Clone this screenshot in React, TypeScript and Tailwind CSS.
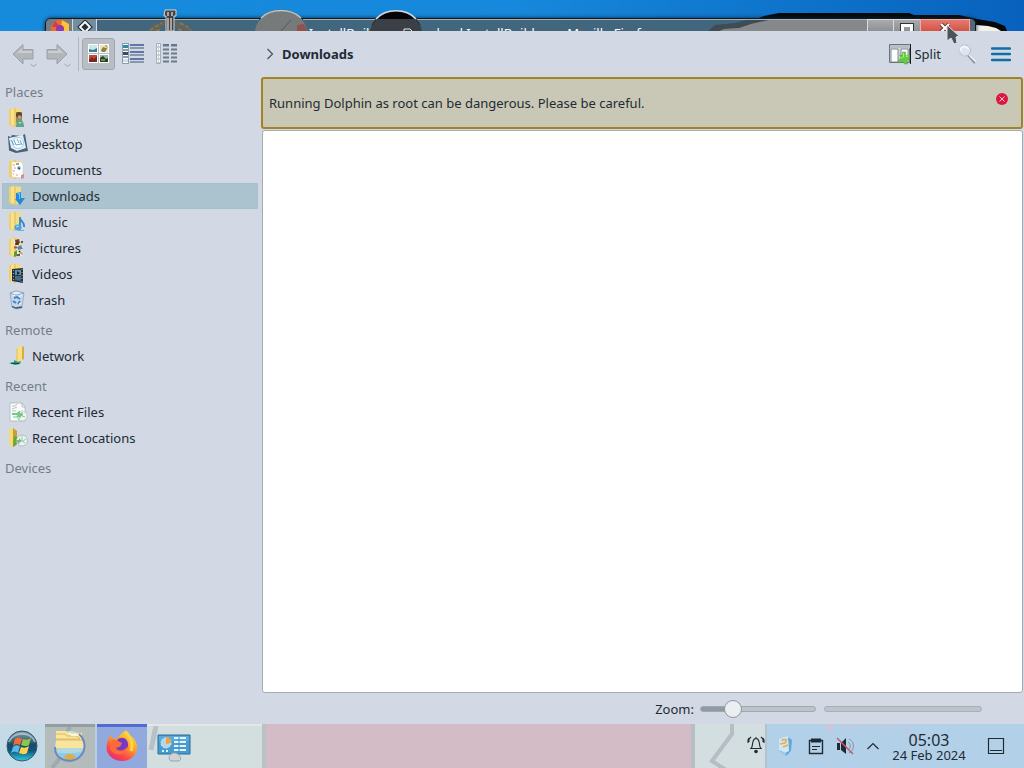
import React from "react";

type Kind =
  | "home" | "desktop" | "documents" | "downloads" | "music" | "pictures"
  | "videos" | "trash" | "network" | "files" | "locations";

function Folder() {
  return (
    <>
      <path d="M1 1l6-1v19l-6-2z" fill="#eed06b" />
      <path d="M3 1l4-1v18l-4-1z" fill="#f6e18c" />
      <path d="M7 0l6 1v15l-6 3z" fill="#f4dc83" />
      <path d="M7 0v19" stroke="#d9b24a" strokeWidth=".8" />
    </>
  );
}

function PlaceIcon({ kind }: { kind: Kind }) {
  return (
    <svg viewBox="0 0 20 20" className="size-5 shrink-0" aria-hidden="true">
      {kind === "home" && (
        <>
          <Folder />
          <path d="M8 4h6v9l-6 2z" fill="#a98445" />
          <circle cx="11" cy="7" r="3" fill="#5c4a30" />
          <circle cx="11.5" cy="9" r="1.8" fill="#d99b6c" />
          <path d="M8 19c0-6 2-8 4-8s4 4 4 8z" fill="#5fa48a" />
          <path d="M10 14l2 2 2-2" fill="#a6d8c0" />
        </>
      )}
      {kind === "desktop" && (
        <>
          <path d="M0 2l3 1 1-2 9 1 4-2 2 12 1 5-12 2-7-3z" fill="#4a627a" />
          <path d="M1 4l14-3 3 13-9 3-6-3z" fill="#dff0fa" />
          <circle cx="10" cy="9" r="5.5" fill="#f8fcff" stroke="#8ab8dd" strokeWidth=".7" />
          <path d="M6 6l2 5 5-1M9 5l2 4M3 6l3 5M12 6l2 5" stroke="#4b8fc2" strokeWidth=".8" fill="none" />
          <path d="M1 16l6 2 10-2" stroke="#53606f" fill="none" />
        </>
      )}
      {kind === "documents" && (
        <>
          <Folder />
          <path d="M4 2h9l2 2v14l-11-1z" fill="#fff" stroke="#cac5b8" strokeWidth=".5" />
          <path d="M5 5h2m-1 3h2m-3 3h2m1 4h2m-5-1h1" stroke="#e4918d" />
          <circle cx="11" cy="8" r="1.7" fill="#6e91ad" />
          <path d="M8 4h3M10 8l2 1" stroke="#33424f" />
          <path d="M13 15l3-1v4l-3 1z" fill="#cf9489" />
        </>
      )}
      {kind === "downloads" && (
        <>
          <Folder />
          <path d="M8 7l5-1v6h4l-5 7-5-6h1z" fill="#2389dc" />
          <path d="M9.5 8l2-1v6" stroke="#74c2f4" fill="none" />
        </>
      )}
      {kind === "music" && (
        <>
          <Folder />
          <path d="M12 5v10m0-9c0 3 5 4 4 9" stroke="#2d8ad0" strokeWidth="1.8" fill="none" />
          <ellipse cx="10" cy="15.5" rx="3.6" ry="3" fill="#48a2df" />
          <path d="M8 15l3-1" stroke="#b4e0ff" />
          <path d="M10 18.5h6" stroke="#68b2e2" />
        </>
      )}
      {kind === "pictures" && (
        <>
          <Folder />
          <path d="M6 2h6v5H6zM8 8h7v4H8zM6 13h8v5H6z" fill="#e9f0f3" />
          <path d="M7 2l4-1 1 4-4 2z" fill="#743a2c" />
          <path d="M9 9l4-2 2 4-5 1z" fill="#5c88a2" />
          <path d="M6 14l3-2v6l-3 1z" fill="#5b9a35" />
          <path d="M7 6h4m2-2h2m-4 9l3 3m-5 1h3" stroke="#28323a" strokeWidth="1.4" />
          <path d="M6 9.5h3" stroke="#cc4028" strokeWidth="2" />
          <path d="M11 15h3" stroke="#d8ab40" strokeWidth="2" />
        </>
      )}
      {kind === "videos" && (
        <>
          <Folder />
          <path d="M4 5l11-1v15L4 17z" fill="#26333d" />
          <path d="M7 6h6v5H7z" fill="#608fb0" />
          <path d="M7 12h6v5l-6-1z" fill="#3c6e8e" />
          <path d="M9 7l3 2-3 2z" fill="#172029" />
          <path d="M5.5 6v11m8.5-12v13" stroke="#b7c3c9" strokeWidth=".8" strokeDasharray="1 2" />
        </>
      )}
      {kind === "trash" && (
        <>
          <path d="M2 3l6-2 8 2-2 15-6 1-4-2z" fill="#c3d6ea" stroke="#8197b0" strokeWidth=".6" />
          <path d="M2 3l6 2 8-2-8-2z" fill="#e9f2fc" stroke="#758fae" strokeWidth=".6" />
          <path d="M6 8l3-1 3 2m0 2l-2 3m-2-1l-3-2" stroke="#4880c2" strokeWidth="2" fill="none" />
          <path d="M4 16.5l4 1.5 6-1" stroke="#435365" strokeWidth="1.3" fill="none" />
          <path d="M11 7l3-2m-9 1l2-1m4 9l2-1" stroke="#f9ffff" />
        </>
      )}
      {kind === "network" && (
        <>
          <path d="M8 3l3-2v15l-3 1z" fill="#e8cf75" />
          <path d="M10 1l5-1v14l-5 2z" fill="#f6df86" />
          <path d="M14 0l2 1v12l-2 1z" fill="#d7ad43" />
          <path d="M1 17l5-1v-2l4 2 3-1-1 3-5 1z" fill="#25987d" />
          <path d="M3 17.5h8" stroke="#075841" />
        </>
      )}
      {kind === "files" && (
        <>
          <path d="M2 1h12l3 4v14H2z" fill="#f8fbfc" stroke="#99aaab" strokeWidth=".6" />
          <path d="M14 1v4h3M4 4h3l2-2M4 7l5-2M4 9h4" stroke="#99a9a8" strokeWidth=".7" fill="none" />
          <circle cx="14" cy="14" r="5" fill="#eaf5ee" stroke="#a5b7b6" strokeWidth=".6" />
          <path d="M4 11h4c2 0 2-2 4-2v2l3 1-3 4-4-2h2l-1-1H4z" fill="#76c982" />
          <path d="M5 15h5m0 2h2" stroke="#7bc889" />
          <path d="M14 10v4l3 1" stroke="#708888" fill="none" strokeWidth=".6" />
        </>
      )}
      {kind === "locations" && (
        <>
          <path d="M1 1l4-1v19l-4-2z" fill="#f5db77" />
          <path d="M5 0l4 3v13l-4 3z" fill="#c79f36" />
          <path d="M6 8l4 2-2 7-3 2z" fill="#65a637" />
          <circle cx="14" cy="12.5" r="5.5" fill="#e8f5ee" stroke="#9bafb0" strokeWidth=".7" />
          <path d="M14 8v5l3 2m-2-2l3-2" stroke="#8aa5a1" strokeWidth=".7" fill="none" />
          <path d="M8 12h3v-2l3 3-4 3v-2H7z" fill="#7bbd77" />
        </>
      )}
    </svg>
  );
}

const groups: { title: string; items: { name: string; kind: Kind }[] }[] = [
  {
    title: "Places",
    items: [
      { name: "Home", kind: "home" },
      { name: "Desktop", kind: "desktop" },
      { name: "Documents", kind: "documents" },
      { name: "Downloads", kind: "downloads" },
      { name: "Music", kind: "music" },
      { name: "Pictures", kind: "pictures" },
      { name: "Videos", kind: "videos" },
      { name: "Trash", kind: "trash" },
    ],
  },
  { title: "Remote", items: [{ name: "Network", kind: "network" }] },
  {
    title: "Recent",
    items: [
      { name: "Recent Files", kind: "files" },
      { name: "Recent Locations", kind: "locations" },
    ],
  },
  { title: "Devices", items: [] },
];

function BackgroundWindow() {
  return (
    <div className="relative h-[31px] shrink-0 overflow-hidden bg-linear-to-r from-[#168bdc] via-[#1788dc] to-[#0862bd]">
      <svg className="absolute top-0 right-0 h-[31px] w-[400px]" viewBox="0 0 400 31" aria-hidden="true">
        <path d="M130 20l10-4 15-3h130l5 2h45l18 4 18 3 10 4 2 5H130z" fill="#050708" />
        <path d="M352 31v-6l12 1 8 2 5 3z" fill="#f3f2e9" />
      </svg>
      <div className="relative mr-12 ml-[45px] pt-[18px]">
        <div className="flex h-6 overflow-hidden rounded-t-md border border-[#101820] bg-[#41667e] shadow-[inset_0_1px_0_#b9c9d1,0_0_4px_#10283c]">
          <div className="w-[26px] bg-[#777b83] pl-1">
            <svg viewBox="0 0 20 20" className="size-5" aria-hidden="true">
              <circle cx="10" cy="10" r="9" fill="#f36b22" />
              <path d="M12 1l7 4v8l-9 1z" fill="#fbc43b" />
              <path d="M2 8l3-6 3 3 3 3z" fill="#c93f5a" />
              <circle cx="10" cy="10" r="4" fill="#8f3aae" />
            </svg>
          </div>
          <div className="flex w-[25px] justify-center border-x border-[#d0dae0] bg-[#758e9e] pt-px">
            <svg viewBox="0 0 16 16" className="size-4" aria-hidden="true">
              <path d="M8 2l5 5-5 5-5-5z" fill="#26323e" stroke="#20303c" strokeWidth="4" />
              <path d="M8 2l5 5-5 5-5-5z" fill="#26323e" stroke="#fff" strokeWidth="1.8" />
            </svg>
          </div>
          <div className="relative flex-1 overflow-hidden border-t border-[#9fb2bd] pt-1 text-center text-[13px] leading-[18px] whitespace-nowrap text-white">
            <svg className="absolute top-0 right-0 h-3 w-[160px]" viewBox="0 0 160 12" aria-hidden="true">
              <path d="M2 12l8-6 24-2 20-4h106v12z" fill="#85898c" />
              <path d="M0 12l8-7 20-2 12-3h22l-18 4-12 4-15 1-7 3z" fill="#404c54" />
            </svg>
            InstallBuilder - Download InstallBuilder — Mozilla Firefox
          </div>
          <button aria-label="Minimize window" className="w-[26px] border-t border-l border-[#d9dcde] bg-linear-to-b from-[#a9abad] to-[#777b7e] px-[7px] pt-2">
            <span className="block h-2 border border-[#333] bg-white" />
          </button>
          <button aria-label="Maximize window" className="w-[27px] border-t border-l border-[#d9dcde] bg-linear-to-b from-[#a9abad] to-[#777b7e] px-[7px] pt-[3px]">
            <span className="block h-4 border-3 border-white outline outline-[#333]" />
          </button>
          <button aria-label="Close window" className="flex w-[50px] justify-center border-x border-t border-[#f4aaa3] bg-linear-to-b from-[#e47970] to-[#c52a1c] pt-[3px]">
            <svg viewBox="0 0 12 10" className="h-[10px] w-3" aria-hidden="true">
              <path d="M2 1l8 8M10 1L2 9" stroke="#632d2a" strokeWidth="4" />
              <path d="M2 1l8 8M10 1L2 9" stroke="#fff" strokeWidth="2.3" />
            </svg>
          </button>
          <div className="w-[5px] bg-[#536879]" />
        </div>
      </div>
      <svg className="absolute top-0 left-[140px] h-[31px] w-[300px]" viewBox="0 0 300 31" aria-hidden="true">
        <path d="M8 31l5-6 10-4h14l10 4 6 6h-9l-6-4H22l-6 4z" fill="#5c6561" />
        <path d="M10 30l7-4 5-3m18 0l6 3 5 4m-35 1l6-2m16 0l5 2" fill="none" stroke="#8b7448" strokeWidth="2" strokeDasharray="4 2" />
        <path d="M25 10h11v6h-2v15h-8V16h-2z" fill="#42434a" stroke="#d4d4ce" />
        <path d="M28 12v4m4-4v4m-4 2v13m3-13v13" stroke="#a7a59e" strokeWidth="2" />
        <path d="M115 31c4-27 47-28 52 0z" fill="#777a7b" />
        <path d="M119 20c10-13 34-13 44 0" fill="none" stroke="#34383a" />
        <path d="M121 18c10-10 30-10 40 0" fill="none" stroke="#c2c2be" strokeWidth="1.5" />
        <path d="M151 20l-10 11" stroke="#54585a" />
        <path d="M157 25l7-1 3 7h-10z" fill="#91514f" />
        <path d="M230 31c5-27 47-27 52 0z" fill="#3a4045" />
        <path d="M238 19c10-11 26-11 36 0z" fill="#050507" />
        <path d="M232 25c9-18 39-18 48 0" fill="none" stroke="#25292c" />
        <path d="M236 19c10-11 30-11 40 0" fill="none" stroke="#d8dbdb" strokeWidth="1.5" />
        <path d="M264 31v-2h6l2 2" stroke="#e8edf0" fill="none" />
      </svg>
    </div>
  );
}

function Arrow({ forward = false }: { forward?: boolean }) {
  return (
    <button aria-label={forward ? "Forward" : "Back"} className="flex size-[34px] items-center justify-center">
      <svg viewBox="0 0 26 28" className="h-7 w-[26px]" aria-hidden="true">
        <g transform={forward ? "matrix(-1 0 0 1 24 0)" : undefined}>
          <path d="M2 14L12 4.500v5h10v9.500H12v5z" fill="#b2b5ba" stroke="#9ca1a7" />
          <path d="M5 14l6-6v3h10v2H8z" fill="#cbcdd1" />
        </g>
        <path d="M19.500 24l3 2.500 3-2.500" fill="none" stroke="#9aa2aa" />
      </svg>
    </button>
  );
}

function ViewIcon({ mode }: { mode: "icons" | "compact" | "details" }) {
  return (
    <svg viewBox="0 0 22 22" className="size-[22px]" aria-hidden="true">
      {mode === "icons" && (
        <>
          <path d="M0 1h10v9H0zM11 1h10v9H11zM0 11h10v9H0zM11 11h10v9H11z" fill="#fbfcfb" />
          <path d="M1 2h8v7H1z" fill="#c9e8ec" />
          <path d="M1 6l4 1 4-2v4H1z" fill="#378291" />
          <path d="M12 2h8v7h-8z" fill="#e9e6cf" />
          <path d="M13 7l2-3 3 1 2-1-3 5h-3z" fill="#8b8440" />
          <path d="M17 3h2" stroke="#d3ad35" strokeWidth="2" />
          <path d="M1 12h8v7H1z" fill="#c34a39" />
          <path d="M1 17l3-3 2 2 3-3v6H1z" fill="#7a2520" />
          <path d="M12 12h8v7h-8z" fill="#8fb7b0" />
          <path d="M12 15l3-2 3 3 2-1v4h-8z" fill="#29402a" />
          <path d="M13 17h4" stroke="#9caa32" strokeWidth="1.5" />
        </>
      )}
      {mode === "compact" && (
        <>
          {[0, 7, 14].map((y, i) => (
            <React.Fragment key={y}>
              <path d={`M.5 ${y + 0.5}h6v6h-6z`} fill="#f9ffff" stroke="#6f8798" strokeWidth=".8" />
              <path d={`M1 ${y + 2}h5v3H1z`} fill={["#328b9f", "#434468", "#d3dde4"][i]} />
              <path d={`M8 ${y + 2}h14`} stroke="#5d77aa" strokeWidth="2" />
              <path d={`M8 ${y + 5}h14`} stroke="#596a80" strokeWidth="1.2" />
            </React.Fragment>
          ))}
        </>
      )}
      {mode === "details" && (
        <>
          <path d="M.5.5h4v20h-4z" fill="#fff" stroke="#a5b3b9" />
          {[1, 5, 9, 13, 17].map((y) => (
            <React.Fragment key={y}>
              <path d={`M1 ${y + 3}h3m-2-2h1`} stroke="#91a3aa" />
              <path d={`M7 ${y + 1.5}h6m2 0h6`} stroke="#6c7b88" strokeWidth="2" />
            </React.Fragment>
          ))}
          <path d="M7 1.5h6m2 0h6" stroke="#5b72a1" />
        </>
      )}
    </svg>
  );
}

function Toolbar() {
  return (
    <header className="flex h-[46px] shrink-0 items-center">
      <div className="flex w-[262px] shrink-0 items-center pl-[7px]">
        <Arrow />
        <Arrow forward />
        <div className="mx-[3px] h-[34px] w-px bg-[#b2b7bf]" />
        <button aria-label="Icons view" aria-pressed="true" className="flex h-8 w-[33px] items-center justify-center rounded-[3px] border border-[#a1a7ad] bg-[#b9bec5]">
          <ViewIcon mode="icons" />
        </button>
        <button aria-label="Compact view" className="flex h-8 w-[35px] items-center justify-center"><ViewIcon mode="compact" /></button>
        <button aria-label="Details view" className="flex h-8 w-[34px] items-center justify-center"><ViewIcon mode="details" /></button>
      </div>
      <nav aria-label="Location" className="flex flex-1 items-center gap-2 pl-1">
        <svg viewBox="0 0 8 12" className="h-3 w-2" aria-hidden="true"><path d="M1.5 1l5 5-5 5" fill="none" stroke="#4c555f" strokeWidth="1.3" /></svg>
        <a href="#downloads" className="font-bold">Downloads</a>
      </nav>
      <button className="flex items-center gap-[3px]">
        <svg viewBox="0 0 22 22" className="size-[22px]" aria-hidden="true">
          <path d="M.5 1.5h20v18H.5z" fill="#d0d6d8" stroke="#67757b" />
          <path d="M1 2h20v3H1z" fill="#b6c0c6" />
          <path d="M21.5 1v20" stroke="#171c20" />
          <path d="M2 6h7v13H2zM12 6h7v13h-7z" fill="#fbfcfc" stroke="#6e757b" strokeWidth=".8" />
          <path d="M13.500 9h3v4l4-1v4l-3 1 1 4h-3l-2-3-4 2v-3l3-2-2-3h3z" fill="#63cb3d" stroke="#4fa638" strokeWidth=".5" />
          <path d="M14.500 10v4l-3 1m5-1l3-1" fill="none" stroke="#a8ee79" />
        </svg>
        Split
      </button>
      <button aria-label="Search" className="ml-4 size-[22px]">
        <svg viewBox="0 0 22 22" aria-hidden="true">
          <path d="M11 12l7 8" stroke="#8694a2" strokeWidth="2.5" />
          <path d="M12 12l7 7" stroke="#eef3f9" strokeWidth="1.5" />
          <circle cx="8" cy="7.5" r="5.5" fill="#dfe5ef" stroke="#b0bbc6" strokeDasharray="4 1" />
          <path d="M3.5 8c0-5 5-6 8-2" stroke="#f4f7fa" strokeWidth="2" fill="none" />
        </svg>
      </button>
      <button aria-label="Open menu" className="mr-3 ml-3 size-5">
        <svg viewBox="0 0 20 20" aria-hidden="true"><path d="M1 4.500h18M1 10h18M1 16h18" stroke="#116ea2" strokeWidth="2.4" strokeLinecap="round" /></svg>
      </button>
    </header>
  );
}

function Sidebar() {
  return (
    <aside className="w-[258px] shrink-0 pt-0.5 pl-0.5" aria-label="Places">
      {groups.map((group) => (
        <section key={group.title} className="mb-1">
          <h2 className="flex h-[26px] items-center pl-[3px] text-[#747e89]">{group.title}</h2>
          <ul>
            {group.items.map((item) => (
              <li key={item.name}>
                <a
                  href={"#" + item.kind}
                  className={
                    item.kind === "downloads"
                      ? "flex h-[26px] items-center gap-1 border border-[#a6bfca] bg-[#abc3ce] pl-[5px]"
                      : "flex h-[26px] items-center gap-1 pl-1.5"
                  }
                >
                  <PlaceIcon kind={item.kind} />
                  {item.name}
                </a>
              </li>
            ))}
          </ul>
        </section>
      ))}
    </aside>
  );
}

function StatusBar() {
  return (
    <footer className="flex h-[31px] shrink-0 items-center pr-[41px]">
      <div className="flex-1" />
      <label htmlFor="zoom" className="mr-1.5">Zoom:</label>
      <input
        id="zoom"
        type="range"
        min="0"
        max="100"
        defaultValue="24"
        className="h-5 w-[116px] appearance-none bg-transparent [&::-webkit-slider-runnable-track]:h-1.5 [&::-webkit-slider-runnable-track]:rounded-full [&::-webkit-slider-runnable-track]:border [&::-webkit-slider-runnable-track]:border-[#a0a7ae] [&::-webkit-slider-runnable-track]:bg-[linear-gradient(to_right,#8e9ba5_28%,#bdc3cb_28%)] [&::-webkit-slider-thumb]:mt-[-7px] [&::-webkit-slider-thumb]:size-[18px] [&::-webkit-slider-thumb]:appearance-none [&::-webkit-slider-thumb]:rounded-full [&::-webkit-slider-thumb]:border [&::-webkit-slider-thumb]:border-[#8f979e] [&::-webkit-slider-thumb]:bg-[#eceff1]"
      />
      <div role="progressbar" aria-label="Disk space" className="ml-2 h-1.5 w-[158px] rounded-full border border-[#a9afb7] bg-[#bdc3cb]" />
    </footer>
  );
}

function Taskbar() {
  return (
    <footer className="relative flex h-11 shrink-0 items-stretch overflow-hidden bg-[#b3d0e9]">
      <button aria-label="Start" className="flex w-[45px] items-center bg-[#c4dae7] pl-1.5">
        <svg viewBox="0 0 32 32" className="size-8" aria-hidden="true">
          <defs>
            <linearGradient id="orb" x2="0" y2="1"><stop stopColor="#8ba0a9" /><stop offset=".45" stopColor="#1b4b6b" /><stop offset=".65" stopColor="#0d557b" /><stop offset="1" stopColor="#32cce1" /></linearGradient>
          </defs>
          <circle cx="16" cy="16" r="15" fill="url(#orb)" stroke="#34566a" />
          <path d="M9 9c3-2 5-1 7 0l-2 6c-3-1-5-1-7 1z" fill="#f06c32" />
          <path d="M17 9c3 1 5 1 8-1l-2 7c-3 2-5 1-8 0z" fill="#8cc64b" />
          <path d="M7 17c2-2 4-2 7-1l-2 7c-3-2-5-1-7 0z" fill="#59b8eb" />
          <path d="M15 17c3 1 5 1 8-1l-2 7c-3 2-5 1-8 0z" fill="#ffd24c" />
          <path d="M3 12C7 1 25 1 29 12" stroke="#d7e6ec" strokeOpacity=".55" strokeWidth="2" fill="none" />
        </svg>
      </button>
      <button aria-label="Dolphin" className="relative flex w-[50px] justify-center border-t-[3px] border-[#929e9f] bg-[#b3bbbb] pt-0.5">
        <svg viewBox="0 0 50 41" className="absolute inset-0 h-[41px] w-[50px]" aria-hidden="true">
          <path d="M25 0l-4 7M15 31L7 41" stroke="#a0a9ac" strokeWidth="4" />
        </svg>
        <svg viewBox="0 0 34 34" className="relative size-[34px]" aria-hidden="true">
          <circle cx="17" cy="17" r="15" fill="#c0dce8" />
          <path d="M3 2h10l2 2h14v9l2 6-1 3H3z" fill="#f8e6a0" />
          <path d="M3 5h9l2 2h10l3 3H3m0 1h27" stroke="#d5ac54" strokeWidth=".8" fill="none" />
          <path d="M16 4l3 2h7" stroke="#fff6cb" strokeWidth="2" fill="none" />
          <path d="M2 19h29c-2 14-24 17-29 0z" fill="#8ecbea" />
          <path d="M3 19h27v3c-9 4-18 1-27 2z" fill="#b1d9dd" />
          <path d="M11 28c2-4 10-4 12 0l-3 3h-6z" fill="#d9ae51" />
          <path d="M26 5c14 13-1 33-17 25C4 28 2 24 2 18" fill="none" stroke="#6e88bb" strokeWidth="2" />
        </svg>
      </button>
      <button aria-label="Firefox" className="ml-0.5 flex w-[50px] justify-center border-t-[3px] border-[#526bd0] bg-[#91a9dc] pt-0.5">
        <svg viewBox="0 0 34 34" className="size-[34px]" aria-hidden="true">
          <defs><linearGradient id="fox" x1=".8" y1="0" x2=".2" y2="1"><stop stopColor="#ffe740" /><stop offset=".45" stopColor="#ff9728" /><stop offset=".75" stopColor="#fa4550" /><stop offset="1" stopColor="#dc297f" /></linearGradient></defs>
          <path d="M3 11l3-5 2 4 5-1c1-3 5-5 8-8 0 5 10 6 11 16 1 18-25 20-30 5-1-4 0-8 1-11z" fill="url(#fox)" />
          <path d="M12 11c5-5 12-1 11 6-2 7-10 6-12 2l5-2z" fill="#7639c4" />
          <path d="M7 11c5-1 6 2 10 3-1 4-6 2-7 5 4 5 11 2 12-2 0 9-12 12-17 3" fill="#ff6b36" />
          <path d="M21 3c5 6 8 12 5 19" stroke="#ffd444" strokeWidth="3" fill="none" />
        </svg>
      </button>
      <button aria-label="System settings" className="relative flex w-[54px] justify-center border-t-2 border-[#e2e8e9] bg-[#d3dedf] pt-0.5">
        <svg viewBox="0 0 54 42" className="absolute inset-0 h-[42px] w-[54px]" aria-hidden="true">
          <path d="M9 0L4 24" stroke="#b9c0c7" strokeWidth="5" />
        </svg>
        <svg viewBox="0 0 34 34" className="relative size-[34px]" aria-hidden="true">
          <path d="M1 7h32v19H1z" fill="#479bce" stroke="#276e9b" />
          <path d="M2 8h30v5H2z" fill="#5aabdc" />
          <circle cx="9" cy="15" r="5" fill="#b4d6e6" stroke="#d9f1fc" strokeDasharray="2 1" />
          <path d="M9 16V9c4 0 5 3 5 6z" fill="#f3a23e" />
          <path d="M17 10h12M17 14h12M17 18h12M17 22h12" stroke="#e1f4fc" strokeWidth="2" />
          <path d="M22 9v14" stroke="#368bc1" />
          <path d="M5 23h2m2 0h2" stroke="#d6f3ff" strokeWidth="2" />
          <path d="M12 31c0-8 10-8 12 0l-2 2h-8z" fill="#cbd4d7" stroke="#9aa6ab" />
        </svg>
      </button>
      <div className="w-[61px] border-t-2 border-[#e2e8e9] bg-[#d3dedf]" />
      <div className="flex-1 border-l-4 border-[#b9c3c6] bg-[#d3bcc6]" />
      <div className="w-[74px] border-l-4 border-[#b7bec5]">
        <svg viewBox="0 0 70 44" className="h-11 w-[70px]" aria-hidden="true">
          <path d="M0 0h70v44H0z" fill="#d2dedf" />
          <path d="M37 0v10L17 37l14 9" fill="none" stroke="#b7bdc5" strokeWidth="4" />
        </svg>
      </div>
      <div className="flex w-[259px] items-center border-l-2 border-[#b4c2ce]">
        <button aria-label="Clipboard manager" className="ml-[9px] w-5">
          <svg viewBox="0 0 20 22" className="h-[22px] w-5" aria-hidden="true">
            <path d="M12 2l4 3-1 11-5 5-7-5 8-2z" fill="#5fa8dc" />
            <path d="M3 4l9-3 1 15-4 2-6-3z" fill="#cfe7f5" />
            <path d="M4 9l5-1c3-3-2-5-3-2m1 6l5-2m-2-5l1-1" stroke="#e2b04d" strokeWidth="1.6" fill="none" />
            <path d="M4 16l6 4" stroke="#98ccee" strokeWidth="2" />
          </svg>
        </button>
        <button aria-label="Clipboard" className="ml-3 w-4">
          <svg viewBox="0 0 16 18" className="h-[18px] w-4" aria-hidden="true">
            <path d="M1.500 3.500h13v13h-13z" fill="none" stroke="#202a33" strokeWidth="1.4" />
            <path d="M3 1.500h10v4H3z" fill="#202a33" />
            <path d="M4 9.500h8M4 12.500h5" stroke="#202a33" strokeWidth="1.2" />
          </svg>
        </button>
        <button aria-label="Volume muted" className="ml-3 w-[18px]">
          <svg viewBox="0 0 18 18" className="size-[18px]" aria-hidden="true">
            <path d="M1 6h3v7H1zM5 6l5-5v16l-5-4z" fill="#202a33" />
            <path d="M12 5c3 2 3 6 0 8m1-11c6 3 6 11 0 14" stroke="#8797a3" fill="none" />
            <path d="M1 1l16 16" stroke="#c55469" strokeWidth="1.5" />
          </svg>
        </button>
        <button aria-label="Show hidden icons" className="ml-3 w-3.5">
          <svg viewBox="0 0 14 10" className="h-[10px] w-3.5" aria-hidden="true"><path d="M1.500 8L7 2.500 12.500 8" fill="none" stroke="#202a33" strokeWidth="1.2" /></svg>
        </button>
        <div className="ml-3 w-[74px] pt-px text-center">
          <div className="text-base leading-4">05:03</div>
          <div className="text-[13px] leading-[14px] whitespace-nowrap">24 Feb 2024</div>
        </div>
        <button aria-label="Show desktop" className="ml-[21px] w-[18px]">
          <svg viewBox="0 0 18 18" className="size-[18px]" aria-hidden="true"><path d="M1.500 1.500h15v15h-15zM3 13.500h12" fill="none" stroke="#202a33" strokeWidth="1.2" /></svg>
        </button>
      </div>
      <svg className="absolute top-0 right-[98px] h-[7px] w-[100px]" viewBox="0 0 100 7" aria-hidden="true">
        <path d="M2 2h4v3H2zM17 2v3m6-3v3m8-3v3m8-3v2m9-2v3m10-3v3m8-3v3m8-3v2m8-2v3" fill="#e6b3c6" stroke="#d9c2d4" strokeWidth="3" opacity=".8" />
      </svg>
      <button aria-label="Notifications" className="absolute top-3 right-[259px] h-[18px] w-[18px]">
        <svg viewBox="0 0 18 18" className="size-[18px]" aria-hidden="true">
          <path d="M4 12.500c2-2 1-4 2-7 1-4 5-4 6 0 1 3 0 5 2 7zM9 1v2M4 1L2 3v3m12-5l2 2v3M2 2L1 4v3m15-5l1 2v3" fill="none" stroke="#202a33" strokeWidth="1.1" />
          <circle cx="9" cy="15.5" r="1.8" fill="#202a33" />
        </svg>
      </button>
    </footer>
  );
}

export default function App() {
  return (
    <div className="relative flex min-h-screen flex-col bg-[#d3dae5] font-['Noto_Sans',sans-serif] text-[13px] leading-5 text-[#232b34]">
      <BackgroundWindow />
      <main className="flex flex-1 flex-col bg-[#d2d9e4] pr-px">
        <Toolbar />
        <div className="flex flex-1">
          <Sidebar />
          <section className="flex min-w-0 flex-1 flex-col pl-[3px]" aria-label="Downloads folder">
            <div role="alert" className="flex h-[52px] shrink-0 justify-between rounded-[3px] border-2 border-[#a48325] bg-[#c9c8b6] pl-1.5">
              <p className="self-center">Running Dolphin as root can be dangerous. Please be careful.</p>
              <button aria-label="Close message" className="mt-3.5 mr-[13px] size-3">
                <svg viewBox="0 0 12 12" aria-hidden="true"><circle cx="6" cy="6" r="6" fill="#db1741" /><path d="M3.500 3.500l5 5m0-5l-5 5" stroke="#f6cbd0" /></svg>
              </button>
            </div>
            <div className="mt-px ml-px flex-1 rounded-[3px] border border-[#a4abb3] bg-white" />
            <StatusBar />
          </section>
        </div>
      </main>
      <Taskbar />
      <svg className="absolute top-6 right-[64px] h-[22px] w-[14px]" viewBox="0 0 14 22" aria-hidden="true"><path d="M1 1v16l4-3 3 6 3-1-1-6 3-1z" fill="#4d5359" stroke="#dce1e6" /></svg>
    </div>
  );
}
